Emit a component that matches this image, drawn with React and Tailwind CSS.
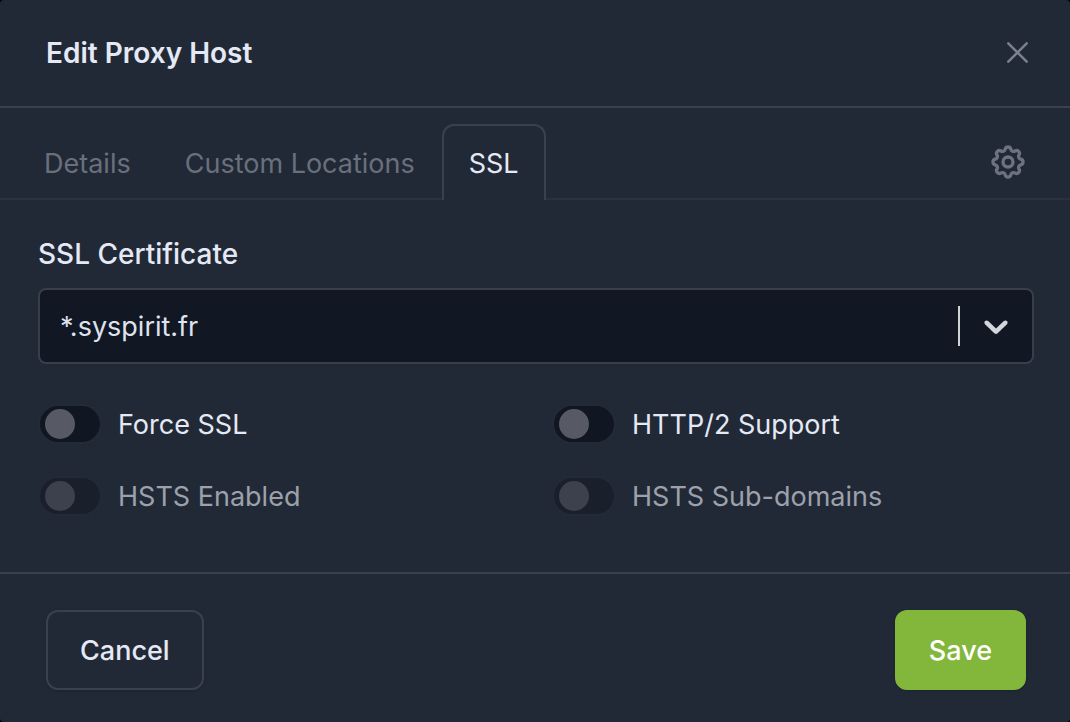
import { useState } from 'react'
import clsx from 'clsx'

const TABS = ['Details', 'Custom Locations', 'SSL']

function CloseIcon() {
  return (
    <svg className="w-6 h-6" viewBox="0 0 24 24" fill="none" stroke="currentColor" strokeWidth={2.5} strokeLinecap="round">
      <path d="M2.3 2.3L20.7 20.7M20.7 2.3L2.3 20.7" />
    </svg>
  )
}

function GearIcon() {
  return (
    <svg className="w-10 h-10" viewBox="0 0 24 24" fill="none" stroke="currentColor" strokeWidth={2} strokeLinecap="round" strokeLinejoin="round">
      <path d="M10.325 4.317c.426 -1.756 2.924 -1.756 3.35 0a1.724 1.724 0 0 0 2.573 1.066c1.543 -.94 3.31 .826 2.37 2.37a1.724 1.724 0 0 0 1.065 2.572c1.756 .426 1.756 2.924 0 3.35a1.724 1.724 0 0 0 -1.066 2.573c.94 1.543 -.826 3.31 -2.37 2.37a1.724 1.724 0 0 0 -2.572 1.065c-.426 1.756 -2.924 1.756 -3.35 0a1.724 1.724 0 0 0 -2.573 -1.066c-1.543 .94 -3.31 -.826 -2.37 -2.37a1.724 1.724 0 0 0 -1.065 -2.572c-1.756 -.426 -1.756 -2.924 0 -3.35a1.724 1.724 0 0 0 1.066 -2.573c-.94 -1.543 .826 -3.31 2.37 -2.37c1 .608 2.296 .07 2.572 -1.065z" />
      <path d="M9 12a3 3 0 1 0 6 0a3 3 0 0 0 -6 0" />
    </svg>
  )
}

function ChevronIcon() {
  return (
    <svg className="w-10 h-10" viewBox="0 0 20 20" fill="currentColor">
      <path d="M4.516 7.548c0.436-0.446 1.043-0.481 1.576 0l3.908 3.747 3.908-3.747c0.533-0.481 1.141-0.446 1.574 0 0.436 0.445 0.408 1.197 0 1.615-0.406 0.418-4.695 4.502-4.695 4.502-0.217 0.223-0.502 0.335-0.787 0.335s-0.57-0.112-0.789-0.335c0 0-4.287-4.084-4.695-4.502s-0.436-1.17 0-1.615z" />
    </svg>
  )
}

function Toggle({ id, label, checked, disabled, onChange }) {
  return (
    <div className="flex items-center gap-4 h-10">
      <input
        id={id}
        type="checkbox"
        role="switch"
        checked={checked}
        disabled={disabled}
        onChange={e => onChange(e.target.checked)}
        className="appearance-none shrink-0 w-16 h-10 flex items-center px-[5px] rounded-full border-2 border-[#242b37] bg-[#111722] before:block before:w-[30px] before:h-[30px] before:rounded-full before:bg-[#575a64] checked:bg-[#83b73c] checked:justify-end checked:before:bg-white disabled:opacity-50"
      />
      <label htmlFor={id} className={clsx('leading-10 pt-[2px]', disabled ? 'text-[#9ca1ac]' : 'text-[#e5e9f5]')}>{label}</label>
    </div>
  )
}

export default function App() {
  const [tab, setTab] = useState('SSL')
  const [cert, setCert] = useState('*.syspirit.fr')
  const [forced, setForced] = useState(false)
  const [http2, setHttp2] = useState(false)
  const [hsts, setHsts] = useState(false)
  const [subdomains, setSubdomains] = useState(false)

  return (
    <div className="bg-black min-h-screen">
      <form
        onSubmit={e => e.preventDefault()}
        className="min-h-screen flex flex-col rounded bg-[#222936] text-[27px] text-[#e5e9f5] font-['Inter',sans-serif]"
      >
        {/* Header */}
        <div className="flex items-center justify-between pl-[46px] pr-10 py-8 border-b-2 border-[#3a404c]">
          <h2 className="text-[28px] leading-[42px] font-semibold">Edit Proxy Host</h2>
          <button type="button" aria-label="Close" className="text-[#7c818c]">
            <CloseIcon />
          </button>
        </div>

        {/* Tabs */}
        <div className="flex items-end pt-4 pl-[17px] pr-[42px] shadow-[inset_0_-2px_0_#2b323e]">
          {TABS.map(t => (
            <button
              key={t}
              type="button"
              onClick={() => setTab(t)}
              className={clsx(
                'h-[76px] px-[25px] pt-[2px] border-2 border-b-0 rounded-t-xl',
                t === tab ? 'border-[#3a404c] bg-[#222936]' : 'border-transparent text-[#69707c]'
              )}
            >{t}</button>
          ))}
          <button type="button" aria-label="Advanced" className="h-[76px] ml-auto text-[#6c727f]">
            <GearIcon />
          </button>
        </div>

        {/* Body */}
        <div className="flex-1 pt-[34px] pl-[38px] pr-9 pb-[54px]">
          <label htmlFor="cert" className="block text-[28px] leading-10 font-medium mb-[14px]">SSL Certificate</label>
          <div className="relative">
            <select
              id="cert"
              value={cert}
              onChange={e => setCert(e.target.value)}
              className="appearance-none w-full h-[76px] pt-[2px] pl-5 pr-24 rounded-lg border-2 border-[#393e4a] bg-[#111723] text-[#dfe3ee]"
            >
              <option value="*.syspirit.fr">*.syspirit.fr</option>
            </select>
            <div className="absolute inset-y-0 right-[18px] flex items-center gap-4 pointer-events-none text-[#d3d6dc]">
              <span className="w-[2px] h-10 bg-[#cfd4d5]" />
              <ChevronIcon />
            </div>
          </div>

          <div className="grid grid-cols-2 gap-8 mt-10">
            <Toggle id="forced" label="Force SSL" checked={forced} onChange={setForced} />
            <Toggle id="http2" label="HTTP/2 Support" checked={http2} onChange={setHttp2} />
            <Toggle id="hsts" label="HSTS Enabled" checked={hsts} disabled={!forced} onChange={setHsts} />
            <Toggle id="subdomains" label="HSTS Sub-domains" checked={subdomains} disabled={!hsts} onChange={setSubdomains} />
          </div>
        </div>

        {/* Footer */}
        <div className="flex items-center justify-between pt-9 pb-8 pl-[46px] pr-11 border-t-2 border-[#3a404c]">
          <button type="button" className="h-20 px-8 pt-[2px] rounded-xl border-2 border-[#3a404c] font-medium shadow-sm">Cancel</button>
          <button type="submit" className="h-20 px-8 pt-[2px] rounded-xl border-2 border-[#83b73c] bg-[#83b73c] text-white font-medium shadow-sm">Save</button>
        </div>
      </form>
    </div>
  )
}
